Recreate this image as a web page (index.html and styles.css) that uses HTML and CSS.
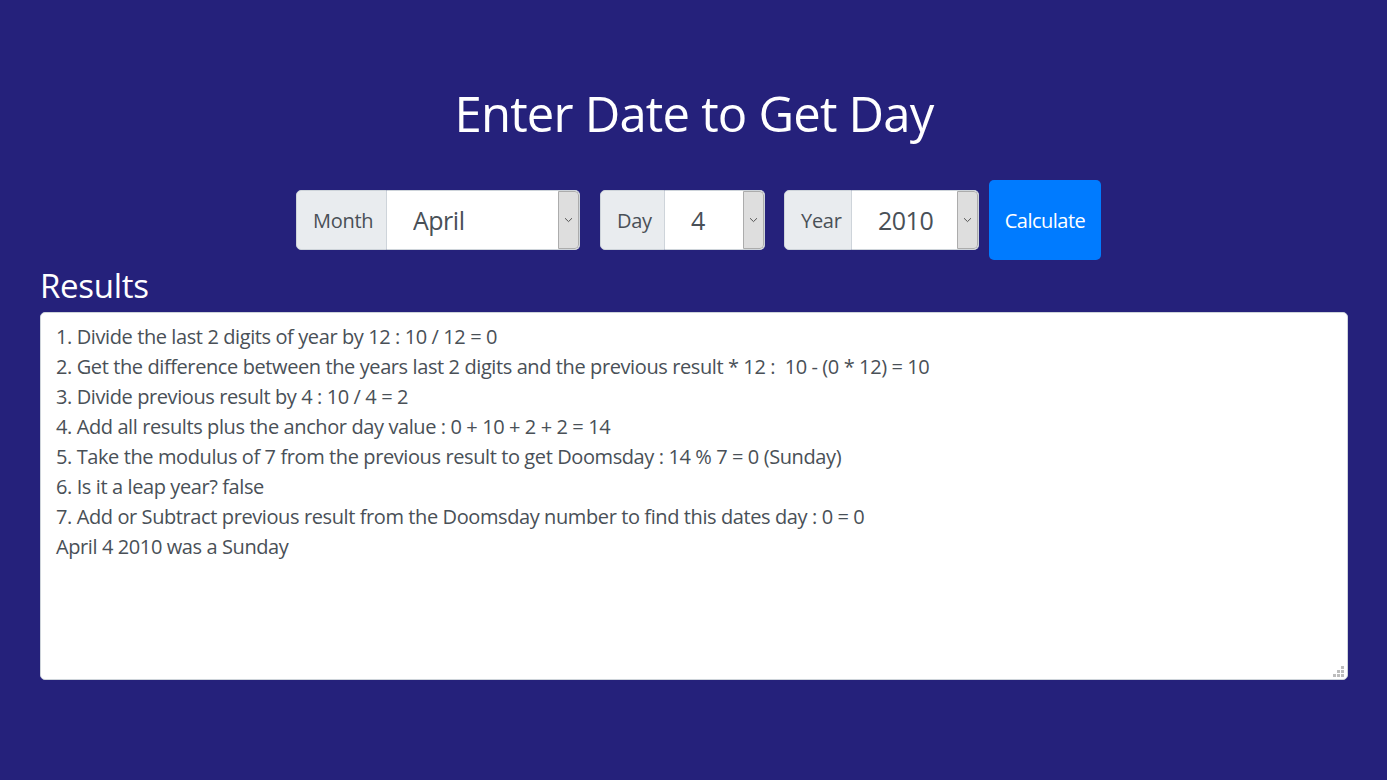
FILE: index.html
```html
<!DOCTYPE html>
<html lang="en">
<head>
<meta charset="utf-8">
<title>Enter Date to Get Day</title>
<link rel="stylesheet" href="styles.css">
</head>
<body>
<div class="page">
  <h1 class="title">Enter Date to Get Day</h1>
  <form class="form-row">
    <div class="group group-month">
      <span class="group-label">Month</span>
      <div class="select-box">
        <select class="select select-month"><option>April</option></select>
        <span class="arrow"><svg width="9" height="6" viewBox="0 0 9 6"><path d="M1 1.2 L4.5 4.6 L8 1.2" fill="none" stroke="#555" stroke-width="1"/></svg></span>
      </div>
    </div>
    <div class="group group-day">
      <span class="group-label">Day</span>
      <div class="select-box">
        <select class="select select-day"><option>4</option></select>
        <span class="arrow"><svg width="9" height="6" viewBox="0 0 9 6"><path d="M1 1.2 L4.5 4.6 L8 1.2" fill="none" stroke="#555" stroke-width="1"/></svg></span>
      </div>
    </div>
    <div class="group group-year">
      <span class="group-label">Year</span>
      <div class="select-box">
        <select class="select select-year"><option>2010</option></select>
        <span class="arrow"><svg width="9" height="6" viewBox="0 0 9 6"><path d="M1 1.2 L4.5 4.6 L8 1.2" fill="none" stroke="#555" stroke-width="1"/></svg></span>
      </div>
    </div>
    <button type="button" class="btn-calc">Calculate</button>
  </form>
  <h2 class="results-title">Results</h2>
  <div class="results-wrap">
    <textarea class="results" readonly>1. Divide the last 2 digits of year by 12 : 10 / 12 = 0
2. Get the difference between the years last 2 digits and the previous result * 12 :  10 - (0 * 12) = 10
3. Divide previous result by 4 : 10 / 4 = 2
4. Add all results plus the anchor day value : 0 + 10 + 2 + 2 = 14
5. Take the modulus of 7 from the previous result to get Doomsday : 14 % 7 = 0 (Sunday)
6. Is it a leap year? false
7. Add or Subtract previous result from the Doomsday number to find this dates day : 0 = 0
April 4 2010 was a Sunday</textarea>
    <svg class="grip" width="11" height="11" viewBox="0 0 11 11"><g fill="#bdbdbd"><rect x="8" y="0" width="3" height="3"/><rect x="4" y="4" width="3" height="3"/><rect x="8" y="4" width="3" height="3"/><rect x="0" y="8" width="3" height="3"/><rect x="4" y="8" width="3" height="3"/><rect x="8" y="8" width="3" height="3"/></g></svg>
  </div>
</div>
</body>
</html>
```
FILE: styles.css
```css
html, body {
  margin: 0;
  padding: 0;
}
body {
  background: #25217b;
  font-family: "Open Sans", "Noto Sans", sans-serif;
  color: #fff;
}
.page {
  padding: 82px 39px 0 40px;
}
.title {
  margin: 0;
  text-align: center;
  font-size: 49px;
  font-weight: 400;
  line-height: 62px;
  letter-spacing: -0.8px;
  color: #fff;
}
.form-row {
  margin: 36px 0 0 0;
  padding-left: 9px;
  display: flex;
  justify-content: center;
  align-items: center;
}
.group {
  display: flex;
  height: 60px;
  margin-right: 20px;
}
.group-day {
  margin-right: 19px;
}
.group-year {
  margin-right: 10px;
}
.group-label {
  display: flex;
  align-items: center;
  box-sizing: border-box;
  padding: 0 16px;
  background: #e9ecef;
  border: 1px solid #ced4da;
  border-radius: 5px 0 0 5px;
  font-size: 20px;
  letter-spacing: -0.3px;
  color: #495057;
}
.group-month .group-label { width: 91px; }
.group-day .group-label { width: 65px; }
.group-year .group-label { width: 68px; }
.select-box {
  display: flex;
  background: #fff;
  border: 1px solid #ced4da;
  border-left: 0;
  border-radius: 0 5px 5px 0;
  overflow: hidden;
}
.select {
  appearance: none;
  -webkit-appearance: none;
  border: 0;
  margin: 0;
  background: #fff;
  outline: none;
  padding: 0 0 0 26px;
  font-family: inherit;
  font-size: 25px;
  letter-spacing: -0.5px;
  color: #495057;
  height: 100%;
}
.select-month { width: 171px; }
.select-day { width: 78px; }
.select-year { width: 105px; }
.arrow {
  box-sizing: border-box;
  width: 21px;
  display: flex;
  align-items: center;
  justify-content: center;
  background: #dedede;
  border: 1px solid #acacac;
  border-radius: 0 4px 4px 0;
}
.btn-calc {
  height: 80px;
  width: 112px;
  padding: 0;
  border: 0;
  border-radius: 5px;
  background: #007bff;
  color: #fff;
  font-family: inherit;
  font-size: 20px;
  letter-spacing: -0.5px;
  cursor: pointer;
}
.results-title {
  margin: 4px 0 0 0;
  font-size: 33px;
  font-weight: 400;
  line-height: 44px;
  letter-spacing: -0.3px;
  color: #fff;
}
.results-wrap {
  position: relative;
  margin-top: 4px;
}
.results {
  display: block;
  box-sizing: border-box;
  width: 100%;
  height: 368px;
  margin: 0;
  padding: 9px 15px 8px;
  border: 1px solid #ced4da;
  border-radius: 5px;
  background: #fff;
  color: #495057;
  font-family: inherit;
  font-size: 20px;
  line-height: 30px;
  letter-spacing: -0.4px;
  resize: none;
  outline: none;
}
.grip {
  position: absolute;
  right: 4px;
  bottom: 3px;
}
```
